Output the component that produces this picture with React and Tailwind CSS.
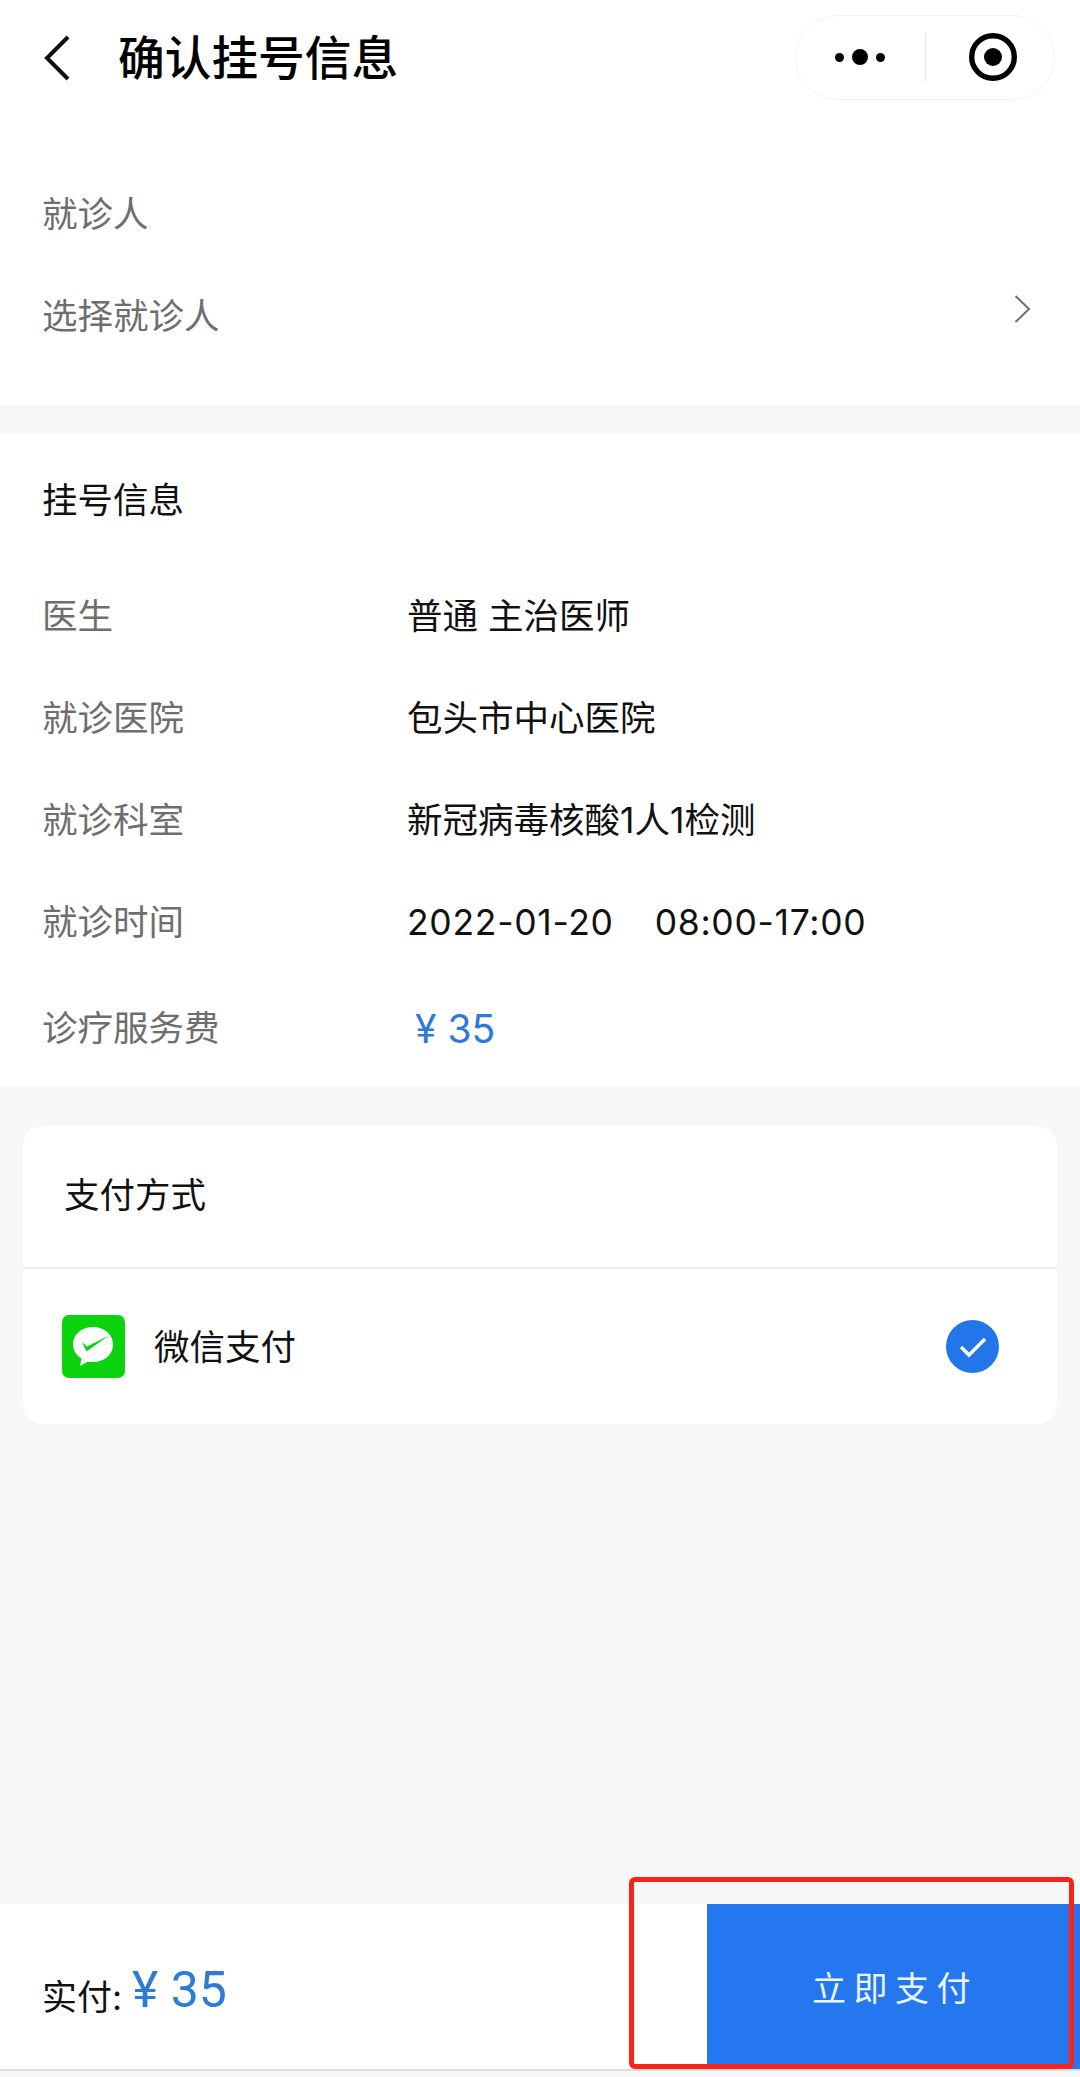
const FONT = "font-['Inter','Noto_Sans_CJK_SC',sans-serif]";

function Row({ label, children }) {
  return (
    <div className="flex h-[102px] items-center pl-[42px]">
      <div className="w-[365px] text-[35.5px] text-[#6e6e6e]">{label}</div>
      <div className="text-[35.5px] text-[#111]">{children}</div>
    </div>
  );
}

export default function App() {
  return (
    <div className={"relative flex h-[2077px] w-[1080px] flex-col overflow-hidden bg-[#f7f7f7] " + FONT}>
      <section className="bg-white pb-[37px]">
        <header className="flex h-[114px] items-center justify-between pl-[43px] pr-[25px]">
          <div className="flex items-center pt-[2px]">
            <svg width="28" height="46" viewBox="0 0 28 46" fill="none" stroke="#111" strokeWidth="4">
              <path d="M25 2 L4 23 L25 44" />
            </svg>
            <h1 className="ml-[47px] text-[46.7px] font-medium text-black">确认挂号信息</h1>
          </div>
          <div className="flex h-[85px] w-[260px] items-center rounded-full border border-[#f3f3f3]">
            <div className="flex w-[129px] items-center justify-end gap-[8px] pr-[40px]">
              <span className="size-[9px] rounded-full bg-black" />
              <span className="size-[16px] rounded-full bg-black" />
              <span className="size-[9px] rounded-full bg-black" />
            </div>
            <div className="h-[48px] w-px bg-[#e2e2e2]" />
            <div className="flex flex-1 justify-center pl-[5px]">
              <svg width="48" height="48" viewBox="0 0 48 48">
                <circle cx="24" cy="24" r="21.3" fill="none" stroke="#000" strokeWidth="5.4" />
                <circle cx="24" cy="24" r="9" fill="#000" />
              </svg>
            </div>
          </div>
        </header>
        <div className="mt-[50px] flex h-[102px] items-center pl-[42px] text-[35.5px] text-[#6e6e6e]">就诊人</div>
        <div className="flex h-[102px] items-center justify-between pl-[42px] pr-[49px] text-[35.5px] text-[#6e6e6e]">
          <span>选择就诊人</span>
          <svg className="mb-[16px]" width="17" height="28" viewBox="0 0 17 28" fill="none" stroke="#6e6e6e" strokeWidth="2">
            <path d="M1.5 1 L15 14 L1.5 27" />
          </svg>
        </div>
      </section>

      <div className="h-[29px] bg-[#f7f7f7]" />

      <section className="bg-white pt-[16px] pb-[6px]">
        <div className="mb-[14px] flex h-[102px] items-center pl-[42px] text-[35.5px] text-[#111]">挂号信息</div>
        <Row label="医生">普通 主治医师</Row>
        <Row label="就诊医院">包头市中心医院</Row>
        <Row label="就诊科室">新冠病毒核酸1人1检测</Row>
        <Row label="就诊时间">
          <span className="tracking-[0.7px]">2022-01-20</span>
          <span className="ml-[41px] tracking-[0.7px]">08:00-17:00</span>
        </Row>
        <div className="mt-[4px]">
          <Row label="诊疗服务费">
            <span className="ml-[8px] text-[39px] text-[#2f7ad6]">¥ 35</span>
          </Row>
        </div>
      </section>

      <section className="mx-[23px] mt-[40px] h-[298px] rounded-[20px] bg-white">
        <div className="flex h-[141px] items-center pl-[41px] pb-[2px] text-[35.5px] text-[#111]">支付方式</div>
        <div className="h-[2px] bg-[#efefef]" />
        <div className="flex h-[155px] items-center pl-[39px] pr-[58px]">
          <svg width="63" height="63" viewBox="0 0 63 63">
            <rect width="63" height="63" rx="7" fill="#0bd30e" />
            <path d="M31 12 C19 12 11 20 11 29.5 C11 35.5 14.5 40.5 19.5 43.5 L18 51 L26 46.5 C27.6 46.9 29.4 47 31 47 C43 47 51 39 51 29.5 C51 20 43 12 31 12 Z" fill="#fff" />
            <path d="M20 27 L25 31.5 L47 20.5 L24.5 36.5 Z" fill="#0bd30e" />
          </svg>
          <span className="ml-[29px] flex-1 pt-[2px] text-[35.5px] text-[#111]">微信支付</span>
          <div className="flex size-[53px] items-center justify-center rounded-full bg-[#2276ea]">
            <svg width="28" height="22" viewBox="0 0 28 22" fill="none" stroke="#fff" strokeWidth="3.4">
              <path d="M2 11 L10 19 L26 3" />
            </svg>
          </div>
        </div>
      </section>

      <div className="flex-1" />

      <footer className="flex h-[167px] items-stretch border-b-2 border-[#dedede] bg-white">
        <div className="flex flex-1 items-center pl-[42px]">
          <span className="mt-[22px] text-[35px] text-[#111]">实付:</span>
          <span className="ml-[10px] mt-[8px] font-['Roboto','Noto_Sans_CJK_SC',sans-serif] text-[50px] font-normal text-[#2f7ad6]">¥ 35</span>
        </div>
        <div className="flex w-[373px] items-center justify-center bg-[#2477ef] pl-[3px] pt-[4px] text-[34px] tracking-[7.5px] text-[#eaf6ff]">
          立即支付
        </div>
      </footer>
      <div className="h-[6px]" />

      <div className="absolute left-[629px] top-[1877px] h-[192px] w-[445px] rounded-[6px] border-[5px] border-[#fb2317]" />
    </div>
  );
}
